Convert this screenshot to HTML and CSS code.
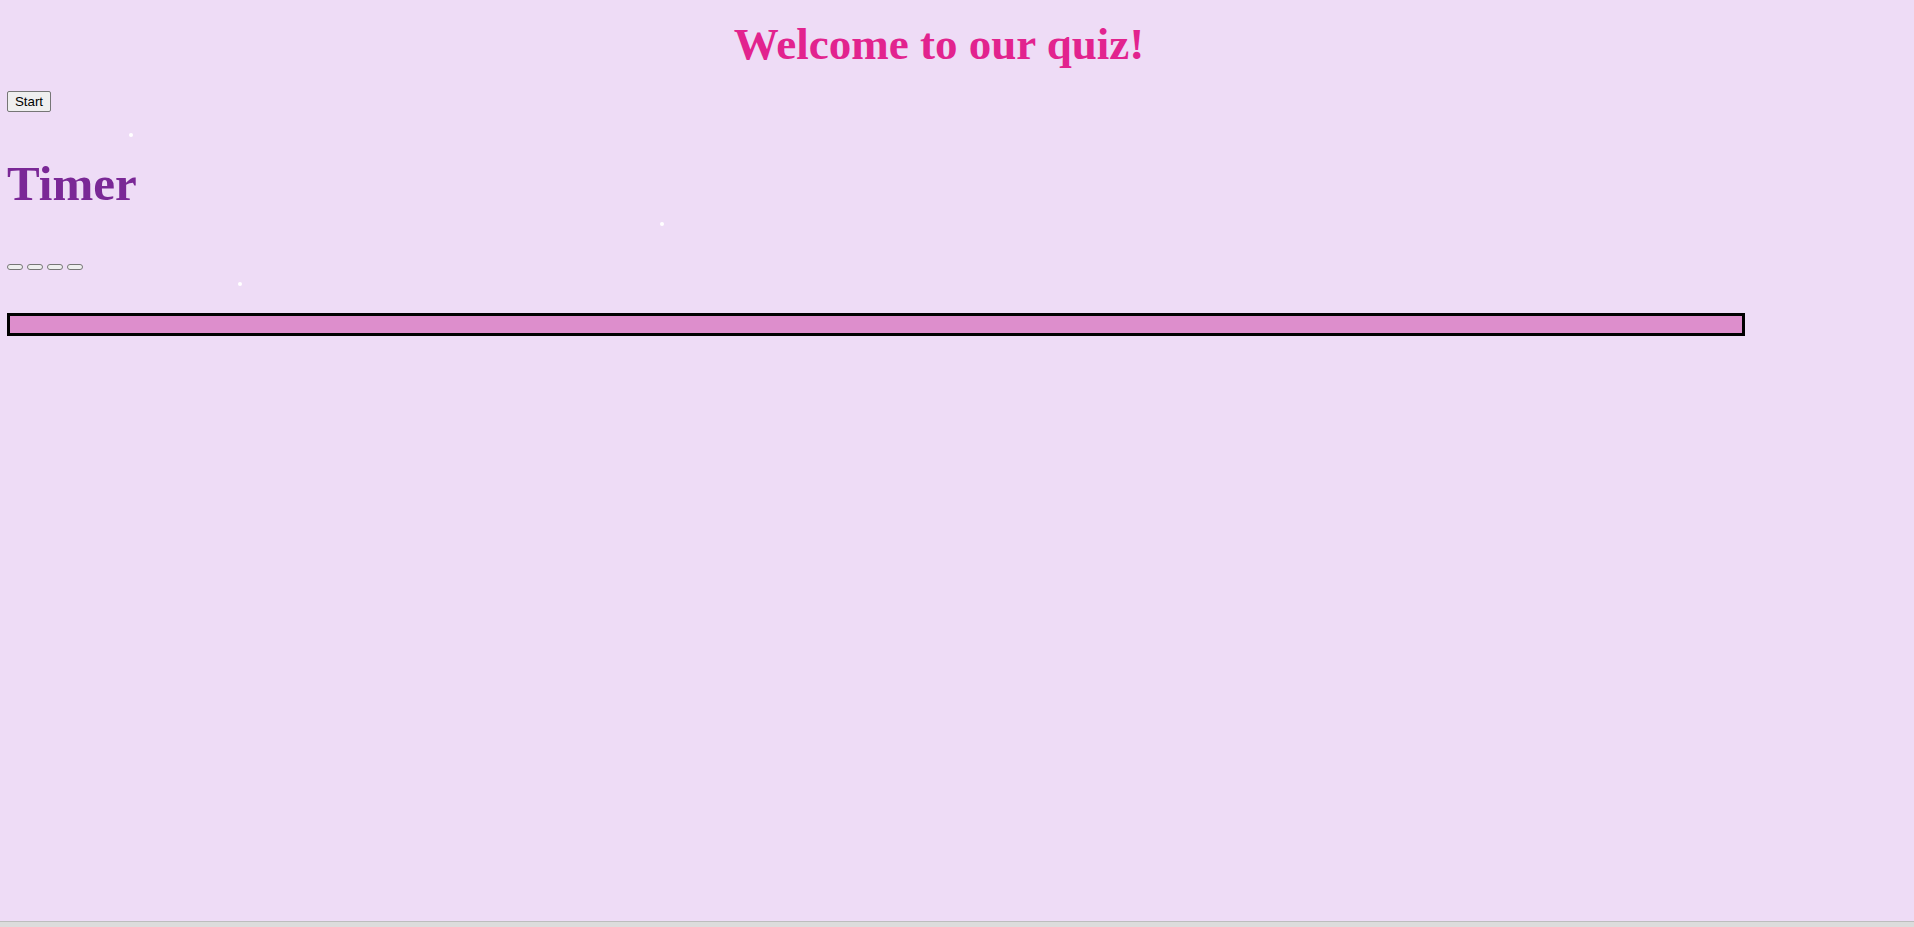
FILE: index.html
```html
<!DOCTYPE html>
<html>
<head>
<meta charset="utf-8">
<link rel="stylesheet" href="styles.css">
</head>
<body>
<div class="page">
  <h1 class="title">Welcome to our quiz!</h1>
  <button class="start">Start</button>
  <h1 class="timer">Timer</h1>
  <div class="answers">
    <button class="ans"></button>
    <button class="ans"></button>
    <button class="ans"></button>
    <button class="ans"></button>
  </div>
  <div class="progress"><div class="fill"></div></div>
  <span class="dot" style="left:129px;top:133px"></span>
  <span class="dot" style="left:660px;top:222px"></span>
  <span class="dot" style="left:238px;top:282px"></span>
</div>
</body>
</html>
```
FILE: styles.css
```css
html { background: #dcdcdc; }
body { margin: 0; font-family: "Liberation Serif", serif; }
.page {
  position: relative;
  background: #eedcf6;
  height: 922px;
  box-sizing: border-box;
  padding: 1px 7px;
  border-bottom: 1px solid #bdbdbd;
}
.title {
  text-align: center;
  color: #e2238e;
  font-size: 45px;
  font-weight: bold;
  margin: 17px 36px 21px 0;
  line-height: 52px;
}
.start {
  font-family: "Liberation Sans", Arial, sans-serif;
  font-size: 13.33px;
  font-weight: normal;
  height: 21px;
  width: 44px;
  padding: 0 4px;
  border: 1px solid #767676;
  border-radius: 2px;
  background: #efefef;
  color: #000;
  display: block;
}
.timer {
  color: #7a2896;
  font-size: 49px;
  font-weight: bold;
  margin: 43px 0 0;
  line-height: 57px;
}
.answers {
  display: flex;
  gap: 4px;
  margin-top: 52px;
}
.ans {
  width: 16px;
  height: 6px;
  padding: 0;
  border: 1px solid #767676;
  border-radius: 3px;
  background: #efefef;
}
.progress {
  margin-top: 43px;
  width: 1732px;
  height: 17px;
  border: 3px solid #000;
  background: #dd8ecc;
}
.dot {
  position: absolute;
  width: 4px;
  height: 4px;
  border-radius: 50%;
  background: #fff;
}
```
